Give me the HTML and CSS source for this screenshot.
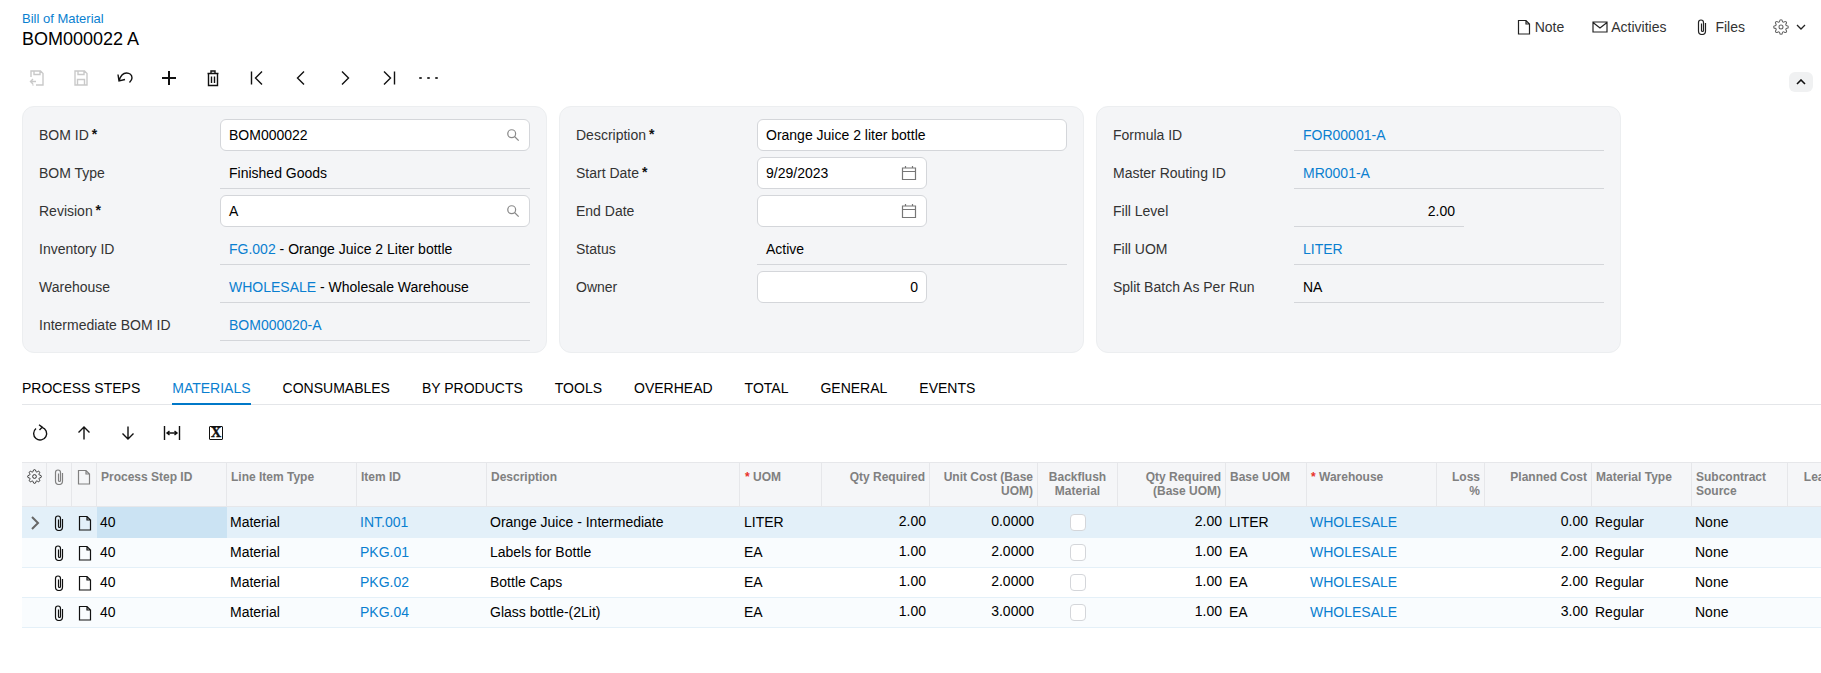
FILE: index.html
```html
<!DOCTYPE html>
<html lang="en">
<head>
<meta charset="utf-8">
<title>Bill of Material</title>
<link rel="stylesheet" href="styles.css">
</head>
<body>
<svg class="defs" aria-hidden="true">
  <symbol id="i-doc" viewBox="0 0 16 16"><path d="M2.500 1.500H10L13.500 5v10h-11zM10 1.500V5h3.500"/></symbol>
  <symbol id="i-clip" viewBox="0 0 16 16"><path d="M11.500 4v8a3.500 3.500 0 0 1-7 0V3.500a2.500 2.500 0 0 1 5 0v8a1 1 0 0 1-2 0V4.500"/></symbol>
  <symbol id="i-gear" viewBox="0 0 24 24"><circle cx="12" cy="12" r="3"/><path d="M19.4 15a1.65 1.65 0 0 0 .33 1.82l.06.06a2 2 0 0 1 0 2.83 2 2 0 0 1-2.83 0l-.06-.06a1.65 1.65 0 0 0-1.82-.33 1.65 1.65 0 0 0-1 1.51V21a2 2 0 0 1-2 2 2 2 0 0 1-2-2v-.09A1.65 1.65 0 0 0 9 19.4a1.65 1.65 0 0 0-1.82.33l-.06.06a2 2 0 0 1-2.83 0 2 2 0 0 1 0-2.83l.06-.06a1.65 1.65 0 0 0 .33-1.82 1.65 1.65 0 0 0-1.51-1H3a2 2 0 0 1-2-2 2 2 0 0 1 2-2h.09A1.65 1.65 0 0 0 4.6 9a1.65 1.65 0 0 0-.33-1.82l-.06-.06a2 2 0 0 1 0-2.83 2 2 0 0 1 2.83 0l.06.06a1.65 1.65 0 0 0 1.82.33H9a1.65 1.65 0 0 0 1-1.51V3a2 2 0 0 1 2-2 2 2 0 0 1 2 2v.09a1.65 1.65 0 0 0 1 1.51 1.65 1.65 0 0 0 1.82-.33l.06-.06a2 2 0 0 1 2.83 0 2 2 0 0 1 0 2.83l-.06.06a1.65 1.65 0 0 0-.33 1.82V9a1.65 1.65 0 0 0 1.51 1H21a2 2 0 0 1 2 2 2 2 0 0 1-2 2h-.09a1.65 1.65 0 0 0-1.51 1z"/></symbol>
  <symbol id="i-search" viewBox="0 0 16 16"><circle cx="6.500" cy="6.500" r="4.500"/><path d="M10 10l4.500 4.500"/></symbol>
  <symbol id="i-cal" viewBox="0 0 16 16"><path d="M1.500 3h13v11.500h-13zM1.500 6.500h13M4.500 1v2M11.500 1v2"/></symbol>
</svg>

<header class="page-head">
  <div class="titles">
    <a class="crumb">Bill of Material</a>
    <h1 class="title">BOM000022 A</h1>
  </div>
  <nav class="head-actions">
    <span class="head-act"><svg class="ic-16"><use href="#i-doc"/></svg>Note</span>
    <span class="head-act"><svg class="ic-16" viewBox="0 0 16 16"><path d="M1 3h14v10H1zM1 3.500l7 5.500 7-5.500"/></svg>Activities</span>
    <span class="head-act act-files"><svg class="ic-16"><use href="#i-clip"/></svg>Files</span>
    <span class="head-act act-settings"><svg class="ic-gear"><use href="#i-gear"/></svg><svg class="ic-chev" viewBox="0 0 10 6"><path d="M1 1l4 4 4-4"/></svg></span>
  </nav>
</header>

<div class="toolbar main-bar">
  <button class="tool off"><svg viewBox="0 0 18 18"><path d="M3 8V2h9.500L15 4.500V16H8M6 2v3.500h6V2M8 12.500H2.500M5 10l-2.500 2.500L5 15M4.500 16h1"/></svg></button>
  <button class="tool off"><svg viewBox="0 0 18 18"><path d="M3 2h9.500L15 4.500V16H3zM6 2v3.500h6V2M5.500 16v-5.500h7V16"/></svg></button>
  <button class="tool"><svg viewBox="0 0 18 18"><path d="M2 5.500l1 6.500 6-1.500M3.200 11.500C4.500 7 7 4 10.500 4c3 0 5.500 2 5.500 5 0 2-1.500 3.500-2.500 4.500"/></svg></button>
  <button class="tool heavy"><svg viewBox="0 0 18 18"><path d="M9 2v14M2 9h14"/></svg></button>
  <button class="tool"><svg viewBox="0 0 18 18"><path d="M3.500 4.500h11M4.500 4.500V16.500h9V4.500M7 4.500V2h4v2.500M7.500 7.500v6.500M10.500 7.500v6.500"/></svg></button>
  <button class="tool"><svg viewBox="0 0 18 18"><path d="M3.500 2.500v13M14 2.500L7.500 9l6.500 6.500"/></svg></button>
  <button class="tool"><svg viewBox="0 0 18 18"><path d="M12 2.500L5.500 9l6.500 6.500"/></svg></button>
  <button class="tool"><svg viewBox="0 0 18 18"><path d="M6 2.500L12.500 9 6 15.500"/></svg></button>
  <button class="tool"><svg viewBox="0 0 18 18"><path d="M14.500 2.500v13M4 2.500L10.500 9 4 15.500"/></svg></button>
  <span class="more"><i></i><i></i><i></i></span>
  <button class="collapse"><svg viewBox="0 0 10 6"><path d="M1 5l4-4 4 4"/></svg></button>
</div>

<section class="cards">
  <div class="card">
    <div class="row"><label class="lbl">BOM ID <b>*</b></label><div class="input with-icon">BOM000022<svg class="ic-search"><use href="#i-search"/></svg></div></div>
    <div class="row"><label class="lbl">BOM Type</label><div class="ro">Finished Goods</div></div>
    <div class="row"><label class="lbl">Revision <b>*</b></label><div class="input with-icon">A<svg class="ic-search"><use href="#i-search"/></svg></div></div>
    <div class="row"><label class="lbl">Inventory ID</label><div class="ro"><a class="link">FG.002</a> - Orange Juice 2 Liter bottle</div></div>
    <div class="row"><label class="lbl">Warehouse</label><div class="ro"><a class="link">WHOLESALE</a> - Wholesale Warehouse</div></div>
    <div class="row"><label class="lbl">Intermediate BOM ID</label><div class="ro"><a class="link">BOM000020-A</a></div></div>
  </div>
  <div class="card">
    <div class="row"><label class="lbl">Description <b>*</b></label><div class="input">Orange Juice 2 liter bottle</div></div>
    <div class="row"><label class="lbl">Start Date <b>*</b></label><div class="input short with-icon">9/29/2023<svg class="ic-cal"><use href="#i-cal"/></svg></div></div>
    <div class="row"><label class="lbl">End Date</label><div class="input short with-icon"><svg class="ic-cal"><use href="#i-cal"/></svg></div></div>
    <div class="row"><label class="lbl">Status</label><div class="ro">Active</div></div>
    <div class="row"><label class="lbl">Owner</label><div class="input short end">0</div></div>
  </div>
  <div class="card">
    <div class="row"><label class="lbl">Formula ID</label><div class="ro"><a class="link">FOR00001-A</a></div></div>
    <div class="row"><label class="lbl">Master Routing ID</label><div class="ro"><a class="link">MR0001-A</a></div></div>
    <div class="row"><label class="lbl">Fill Level</label><div class="ro short end">2.00</div></div>
    <div class="row"><label class="lbl">Fill UOM</label><div class="ro"><a class="link">LITER</a></div></div>
    <div class="row"><label class="lbl">Split Batch As Per Run</label><div class="ro">NA</div></div>
  </div>
</section>

<nav class="tabs">
  <span class="tab">PROCESS STEPS</span>
  <span class="tab active">MATERIALS</span>
  <span class="tab">CONSUMABLES</span>
  <span class="tab">BY PRODUCTS</span>
  <span class="tab">TOOLS</span>
  <span class="tab">OVERHEAD</span>
  <span class="tab">TOTAL</span>
  <span class="tab">GENERAL</span>
  <span class="tab">EVENTS</span>
</nav>

<div class="toolbar grid-bar">
  <button class="tool"><svg viewBox="0 0 18 18"><path d="M5 4.500A6.500 6.500 0 1 0 11 3.300M8 .8l3.200 2.400L8.500 6"/></svg></button>
  <button class="tool"><svg viewBox="0 0 18 18"><path d="M9 15.500V3M3.500 8.500L9 3l5.500 5.500"/></svg></button>
  <button class="tool"><svg viewBox="0 0 18 18"><path d="M9 2.500V15M3.500 9.500L9 15l5.500-5.500"/></svg></button>
  <button class="tool"><svg viewBox="0 0 18 18"><path d="M1.500 2v14M16.500 2v14M4 9h10M6.500 7L4 9l2.500 2M11.500 7L14 9l-2.500 2"/></svg></button>
  <button class="tool"><span class="xl">X</span></button>
</div>

<div class="grid">
  <div class="gr head">
    <div class="c ic"><svg class="ic-gear dark"><use href="#i-gear"/></svg></div>
    <div class="c ic"><svg class="ic-16 clip"><use href="#i-clip"/></svg></div>
    <div class="c ic"><svg class="ic-16"><use href="#i-doc"/></svg></div>
    <div class="c">Process Step ID</div>
    <div class="c">Line Item Type</div>
    <div class="c">Item ID</div>
    <div class="c">Description</div>
    <div class="c uom"><em>*</em> UOM</div>
    <div class="c r">Qty Required</div>
    <div class="c r">Unit Cost (Base UOM)</div>
    <div class="c m">Backflush Material</div>
    <div class="c r">Qty Required (Base UOM)</div>
    <div class="c">Base UOM</div>
    <div class="c"><em>*</em> Warehouse</div>
    <div class="c r">Loss %</div>
    <div class="c r">Planned Cost</div>
    <div class="c">Material Type</div>
    <div class="c">Subcontract Source</div>
    <div class="c r">Lead Time</div>
  </div>

  <div class="gr body selected">
    <div class="c ic"><svg class="ic-arrow" viewBox="0 0 10 16"><path d="M2 2l6 6-6 6"/></svg></div>
    <div class="c ic"><svg class="ic-16 clip"><use href="#i-clip"/></svg></div>
    <div class="c ic"><svg class="ic-16"><use href="#i-doc"/></svg></div>
    <div class="c cur">40</div>
    <div class="c">Material</div>
    <div class="c"><a class="link">INT.001</a></div>
    <div class="c">Orange Juice - Intermediate</div>
    <div class="c uom">LITER</div>
    <div class="c r">2.00</div>
    <div class="c r">0.0000</div>
    <div class="c m"><span class="check"></span></div>
    <div class="c r">2.00</div>
    <div class="c">LITER</div>
    <div class="c"><a class="link">WHOLESALE</a></div>
    <div class="c r"></div>
    <div class="c r">0.00</div>
    <div class="c">Regular</div>
    <div class="c">None</div>
    <div class="c"></div>
  </div>

  <div class="gr body alt">
    <div class="c ic"></div>
    <div class="c ic"><svg class="ic-16 clip"><use href="#i-clip"/></svg></div>
    <div class="c ic"><svg class="ic-16"><use href="#i-doc"/></svg></div>
    <div class="c">40</div>
    <div class="c">Material</div>
    <div class="c"><a class="link">PKG.01</a></div>
    <div class="c">Labels for Bottle</div>
    <div class="c uom">EA</div>
    <div class="c r">1.00</div>
    <div class="c r">2.0000</div>
    <div class="c m"><span class="check"></span></div>
    <div class="c r">1.00</div>
    <div class="c">EA</div>
    <div class="c"><a class="link">WHOLESALE</a></div>
    <div class="c r"></div>
    <div class="c r">2.00</div>
    <div class="c">Regular</div>
    <div class="c">None</div>
    <div class="c"></div>
  </div>

  <div class="gr body">
    <div class="c ic"></div>
    <div class="c ic"><svg class="ic-16 clip"><use href="#i-clip"/></svg></div>
    <div class="c ic"><svg class="ic-16"><use href="#i-doc"/></svg></div>
    <div class="c">40</div>
    <div class="c">Material</div>
    <div class="c"><a class="link">PKG.02</a></div>
    <div class="c">Bottle Caps</div>
    <div class="c uom">EA</div>
    <div class="c r">1.00</div>
    <div class="c r">2.0000</div>
    <div class="c m"><span class="check"></span></div>
    <div class="c r">1.00</div>
    <div class="c">EA</div>
    <div class="c"><a class="link">WHOLESALE</a></div>
    <div class="c r"></div>
    <div class="c r">2.00</div>
    <div class="c">Regular</div>
    <div class="c">None</div>
    <div class="c"></div>
  </div>

  <div class="gr body alt">
    <div class="c ic"></div>
    <div class="c ic"><svg class="ic-16 clip"><use href="#i-clip"/></svg></div>
    <div class="c ic"><svg class="ic-16"><use href="#i-doc"/></svg></div>
    <div class="c">40</div>
    <div class="c">Material</div>
    <div class="c"><a class="link">PKG.04</a></div>
    <div class="c">Glass bottle-(2Lit)</div>
    <div class="c uom">EA</div>
    <div class="c r">1.00</div>
    <div class="c r">3.0000</div>
    <div class="c m"><span class="check"></span></div>
    <div class="c r">1.00</div>
    <div class="c">EA</div>
    <div class="c"><a class="link">WHOLESALE</a></div>
    <div class="c r"></div>
    <div class="c r">3.00</div>
    <div class="c">Regular</div>
    <div class="c">None</div>
    <div class="c"></div>
  </div>
</div>
</body>
</html>
```
FILE: styles.css
```css
* { box-sizing: border-box; }
html, body { margin: 0; padding: 0; background: #fff; overflow: hidden; height: 673px; }
body { font-family: "Liberation Sans", Arial, sans-serif; font-size: 14px; color: #000; }
.defs { position: absolute; width: 0; height: 0; }
svg { fill: none; stroke: currentColor; stroke-width: 1.2; display: block; }

.page-head { display: flex; justify-content: space-between; height: 58px; padding: 11px 0 0 22px; }
.titles { display: flex; flex-direction: column; }
.crumb { font-size: 13px; line-height: 15px; color: #0a7fd0; }
.title { margin: 2px 0 0; font-size: 18px; line-height: 22px; font-weight: 400; color: #000; }
.head-actions { display: flex; align-items: center; gap: 28px; height: 32px; padding-right: 15px; color: #333; font-size: 14px; }
.head-act { display: flex; align-items: center; gap: 3px; }
.head-act svg { color: #222; }
.act-files { gap: 5px; }
.act-settings { gap: 7px; }
.ic-16 { width: 16px; height: 16px; }
.ic-gear { width: 16px; height: 16px; stroke-width: 1.6; color: #666; }
.head-act .ic-gear { color: #666; }
.ic-gear.dark { width: 15px; height: 15px; color: #333; }
.ic-chev { width: 10px; height: 6px; stroke-width: 1.3; }

.toolbar { display: flex; align-items: center; }
.main-bar { height: 40px; padding-left: 15px; }
.grid-bar { height: 55px; margin-bottom: 2px; padding-left: 18px; }
.tool { width: 44px; height: 32px; padding: 0; border: 0; background: none; display: flex; align-items: center; justify-content: center; color: #111; }
.tool svg { width: 18px; height: 18px; stroke-width: 1.4; }
.tool.off { color: #c9c9c9; }
.tool.heavy svg { stroke-width: 2; }
.more { display: flex; gap: 5.5px; margin-left: 8px; width: 22px; }
.more i { width: 2.5px; height: 2.5px; background: #333; border-radius: 50%; }
.collapse { margin-left: auto; margin-right: 8px; width: 24px; height: 20px; margin-top: 8px; border: 0; padding: 0; border-radius: 6px; background: #f0f1f2; display: flex; align-items: center; justify-content: center; }
.collapse svg { width: 10px; height: 6px; stroke-width: 1.6; color: #111; }
.xl { display: block; width: 14px; height: 14px; border: 1.5px solid #111; border-radius: 1px; font-family: "Liberation Serif", serif; font-weight: 700; font-size: 14px; line-height: 11px; text-align: center; color: #111; -webkit-text-stroke: 0.4px #111; }

.cards { display: flex; gap: 12px; margin: 8px 0 0 22px; }
.card { width: 525px; height: 247px; background: #f4f5f7; border: 1px solid #eceef0; border-radius: 12px; padding: 12px 16px 0 16px; display: flex; flex-direction: column; gap: 6px; }
.row { display: grid; grid-template-columns: 181px 1fr; height: 32px; align-items: center; }
.lbl { color: #333; font-size: 14px; }
.lbl b { font-weight: 700; color: #111; margin-left: -1px; position: relative; top: -1px; }
.input { position: relative; height: 32px; line-height: 30px; padding: 0 8px; background: #fff; border: 1px solid #d4d6da; border-radius: 6px; color: #000; }
.ro { height: 32px; line-height: 32px; padding: 0 9px; border-bottom: 1px solid #d4d6da; color: #000; }
.short { width: 170px; }
.end { text-align: right; }
.input.end { padding-right: 8px; }
.ic-search { position: absolute; right: 9px; top: 8px; width: 14px; height: 14px; color: #8a8a8a; stroke-width: 1.4; }
.ic-cal { position: absolute; right: 9px; top: 7px; width: 16px; height: 16px; color: #777; }
.link { color: #0a7fd0; }

.tabs { display: flex; gap: 32px; margin: 16px 0 0 22px; height: 36px; border-bottom: 1px solid #e4e6e9; }
.tab { height: 36px; padding-top: 5px; line-height: 28px; font-size: 14px; color: #000; }
.tab.active { color: #0a7fd0; border-bottom: 2px solid #0078c8; }

.grid { margin-left: 22px; width: 1799px; overflow: hidden; }
.gr { display: grid; grid-template-columns: 25px 25px 25px 130px 130px 130px 253px 82px 108px 108px 80px 108px 81px 130px 48px 107px 100px 96px 79px; width: 1849px; }
.head { height: 45px; background: #f5f6f8; border-top: 1px solid #e6e7ea; border-bottom: 1px solid #e6e7ea; font-size: 12px; line-height: 14px; font-weight: 700; color: #808080; }
.head .c { padding: 7px 4px 0 4px; border-right: 1px solid #e6e7ea; }
.head .c:last-child { border-right: 0; }
.head .ic { padding: 6px 0 0; display: flex; justify-content: center; }
.head em { font-style: normal; color: #e8302a; }
.head .uom { padding-left: 5px; }
.body { height: 30px; background: #fff; border-bottom: 1px solid #e4f0f8; }
.body.alt { background: #f9fcfe; }
.body.selected { height: 31px; background: #e3f0f9; border-bottom: 0; }
.body .c { padding: 0 3px; line-height: 29px; white-space: nowrap; overflow: hidden; color: #000; }
.body.selected .c { line-height: 31px; }
.body .uom { padding-left: 4px; }
.body .ic { display: flex; align-items: center; justify-content: center; padding: 0; color: #111; }
.clip { margin-right: 1px; }
.body .cur { background: #cbe3f3; }
.r { text-align: right; }
.m { text-align: center; }
.body .r { padding-right: 4px; line-height: 27px; }
.body.selected .r { line-height: 29px; }
.body .m { display: flex; align-items: center; justify-content: center; }
.check { display: block; width: 16px; height: 17px; background: #fff; border: 1px solid #d4d6da; border-radius: 4px; }
.ic-arrow { width: 10px; height: 16px; stroke-width: 2; color: #666; }
```
